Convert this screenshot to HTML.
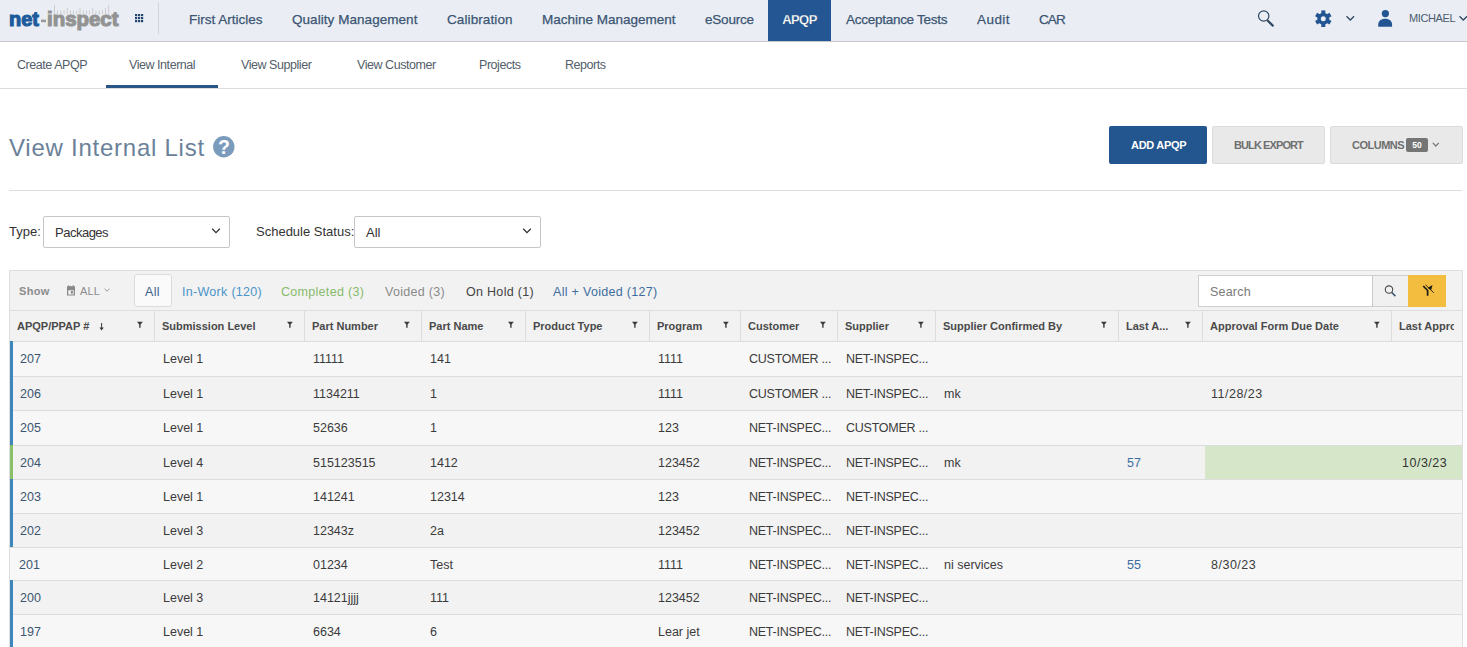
<!DOCTYPE html>
<html><head><meta charset="utf-8"><style>
*{box-sizing:border-box;margin:0;padding:0}
html,body{width:1467px;height:647px;overflow:hidden;background:#fff;font-family:"Liberation Sans",sans-serif;color:#333}
.a{position:absolute;white-space:nowrap}
svg{position:absolute;overflow:visible}
.nav{position:absolute;top:0;height:41px;line-height:39px;font-size:13.5px;color:#3b5573;white-space:nowrap;-webkit-text-stroke:0.25px #3b5573}
.snav{position:absolute;top:58px;font-size:12.5px;color:#535e6a;white-space:nowrap;letter-spacing:-0.45px}
.btn{position:absolute;top:126px;height:38px;border-radius:2px;font-size:11px;font-weight:bold;white-space:nowrap}
.lbl{position:absolute;font-size:13px;color:#333;white-space:nowrap}
.sel{position:absolute;top:216px;height:32px;border:1px solid #c6c6c6;border-radius:2px;background:#fff}
.tb{position:absolute;top:285px;font-size:12.5px;white-space:nowrap;letter-spacing:0.3px}
.hc{position:absolute;top:311px;height:30px;font-size:11px;font-weight:bold;color:#4a4a4a;line-height:30px;white-space:nowrap;overflow:hidden}
.vl{position:absolute;top:311px;width:1px;height:30px;background:#dddddd}
.hl{position:absolute;left:10px;width:1452px;height:1px;background:#dcdcdc}
.cell{position:absolute;font-size:12.5px;color:#333;white-space:nowrap}
</style></head><body>
<div class="a" style="left:0;top:0;width:1467px;height:41px;background:#eaeef4"></div>
<div class="a" style="left:0;top:41px;width:1467px;height:1px;background:#c6c8cc"></div>
<svg style="left:0;top:0" width="160" height="40" viewBox="0 0 160 40">
<g fill="#c2c2c2"><rect x="54.0" y="5" width="0.8" height="9.5"/><rect x="57.2" y="10.5" width="0.8" height="4"/><rect x="60.4" y="10.5" width="0.8" height="4"/><rect x="63.6" y="10.5" width="0.8" height="4"/><rect x="66.8" y="8" width="0.8" height="6.5"/><rect x="70.0" y="10.5" width="0.8" height="4"/><rect x="73.2" y="10.5" width="0.8" height="4"/><rect x="76.4" y="10.5" width="0.8" height="4"/><rect x="79.6" y="8" width="0.8" height="6.5"/><rect x="82.8" y="10.5" width="0.8" height="4"/><rect x="86.0" y="10.5" width="0.8" height="4"/><rect x="89.2" y="10.5" width="0.8" height="4"/><rect x="92.4" y="8" width="0.8" height="6.5"/><rect x="95.6" y="10.5" width="0.8" height="4"/><rect x="98.8" y="10.5" width="0.8" height="4"/><rect x="102.0" y="10.5" width="0.8" height="4"/><rect x="105.2" y="8" width="0.8" height="6.5"/><rect x="108.4" y="5" width="0.8" height="9.5"/></g>
<text x="9" y="26" font-family="Liberation Sans" font-weight="bold" font-size="19.5" fill="#1c5b9c" stroke="#1c5b9c" stroke-width="1.1" textLength="30" lengthAdjust="spacingAndGlyphs">net</text>
<rect x="41" y="19.6" width="5" height="2.6" fill="#9a9a9a"/>
<text x="47" y="26" font-family="Liberation Sans" font-weight="bold" font-size="19.5" fill="#939393" stroke="#939393" stroke-width="1.1" textLength="71.5" lengthAdjust="spacingAndGlyphs">inspect</text>
<g fill="#24466e"><rect x="135" y="14" width="2.2" height="2.2"/><rect x="138" y="14" width="2.2" height="2.2"/><rect x="141" y="14" width="2.2" height="2.2"/><rect x="135" y="17" width="2.2" height="2.2"/><rect x="138" y="17" width="2.2" height="2.2"/><rect x="141" y="17" width="2.2" height="2.2"/><rect x="135" y="20" width="2.2" height="2.2"/><rect x="138" y="20" width="2.2" height="2.2"/><rect x="141" y="20" width="2.2" height="2.2"/></g>
<rect x="158" y="2" width="1" height="32" fill="#d2d5da"/>
</svg>
<div class="nav" style="left:189px;letter-spacing:0px">First Articles</div>
<div class="nav" style="left:292px;letter-spacing:0.05px">Quality Management</div>
<div class="nav" style="left:447px;letter-spacing:0.1px">Calibration</div>
<div class="nav" style="left:542px;letter-spacing:0px">Machine Management</div>
<div class="nav" style="left:705px;letter-spacing:-0.2px">eSource</div>
<div class="nav" style="left:846px;letter-spacing:-0.27px">Acceptance Tests</div>
<div class="nav" style="left:977px;letter-spacing:0.45px">Audit</div>
<div class="nav" style="left:1039px;letter-spacing:-0.9px">CAR</div>
<div class="a" style="left:768px;top:0;width:63px;height:41px;background:#235692"></div>
<div class="nav" style="left:768px;width:63px;text-align:center;color:#fff;font-weight:bold;font-size:13px;letter-spacing:-0.6px">APQP</div>
<svg style="left:1240px;top:0" width="227" height="40" viewBox="1240 0 227 40">
<circle cx="1263.7" cy="16" r="5.2" fill="none" stroke="#2f4864" stroke-width="1.2"/>
<line x1="1267.3" y1="20.2" x2="1273.4" y2="26.3" stroke="#2f4864" stroke-width="2.3"/>
<g transform="translate(1323.3 18.7)" fill="#235592">
<circle r="6" />
<rect x="-2" y="-8.3" width="4" height="4" transform="rotate(0)"/><rect x="-2" y="-8.3" width="4" height="4" transform="rotate(60)"/><rect x="-2" y="-8.3" width="4" height="4" transform="rotate(120)"/><rect x="-2" y="-8.3" width="4" height="4" transform="rotate(180)"/><rect x="-2" y="-8.3" width="4" height="4" transform="rotate(240)"/><rect x="-2" y="-8.3" width="4" height="4" transform="rotate(300)"/>
<circle r="2.5" fill="#eaeef4"/>
</g>
<polyline points="1346.5,16.2 1350.3,20 1354.1,16.2" fill="none" stroke="#2f4864" stroke-width="1.3"/>
<circle cx="1385.4" cy="13.6" r="3.6" fill="#235592"/>
<path d="M1378.2,26.8 L1378.2,25 C1378.2,21 1381,18.8 1385.2,18.8 C1389.4,18.8 1392.1,21 1392.1,25 L1392.1,26.8 Z" fill="#235592"/>
<polyline points="1459.5,16.2 1463.3,20 1467.1,16.2" fill="none" stroke="#2f4864" stroke-width="1.3"/>
</svg>
<div class="a" style="left:1409px;top:12px;font-size:11px;color:#4a5a6e;letter-spacing:-0.4px">MICHAEL</div>
<div class="snav" style="left:17px">Create APQP</div>
<div class="snav" style="left:129px">View Internal</div>
<div class="snav" style="left:241px">View Supplier</div>
<div class="snav" style="left:357px">View Customer</div>
<div class="snav" style="left:479px">Projects</div>
<div class="snav" style="left:565px">Reports</div>
<div class="a" style="left:106px;top:85px;width:112px;height:3px;background:#2a5587"></div>
<div class="a" style="left:0;top:88px;width:1467px;height:1px;background:#dcdcdc"></div>
<div class="a" style="left:9px;top:134px;font-size:24px;color:#6a8199;letter-spacing:0.75px">View Internal List</div>
<svg style="left:213px;top:136px" width="22" height="22" viewBox="0 0 22 22"><circle cx="10.8" cy="10.8" r="10.7" fill="#7b9bbd"/>
<text x="10.9" y="18.4" text-anchor="middle" font-family="Liberation Sans" font-weight="bold" font-size="19.5" fill="#fff">?</text></svg>
<div class="btn" style="left:1109px;width:98px;background:#23558f"></div>
<div class="a" style="left:1131px;top:139px;font-size:11px;font-weight:bold;color:#fff;letter-spacing:-0.3px">ADD APQP</div>
<div class="btn" style="left:1212px;width:113px;background:#e9e9ea;border:1px solid #dbdbdb"></div>
<div class="a" style="left:1234px;top:139px;font-size:11px;font-weight:bold;color:#6f6f6f;letter-spacing:-0.9px">BULK EXPORT</div>
<div class="btn" style="left:1330px;width:133px;background:#e9e9ea;border:1px solid #dbdbdb"></div>
<div class="a" style="left:1352px;top:139px;font-size:11px;font-weight:bold;color:#6f6f6f;letter-spacing:-0.5px">COLUMNS</div>
<div class="a" style="left:1406px;top:138px;width:22px;height:14px;background:#757575;border-radius:2px;color:#fff;font-size:8.5px;font-weight:bold;text-align:center;line-height:14px">50</div>
<svg style="left:1432px;top:142px" width="8" height="6" viewBox="0 0 8 6"><polyline points="0.8,0.8 3.8,4 6.8,0.8" fill="none" stroke="#777" stroke-width="1.2"/></svg>
<div class="a" style="left:9px;top:190px;width:1453px;height:1px;background:#dedede"></div>
<div class="lbl" style="left:9px;top:224px">Type:</div>
<div class="sel" style="left:43px;width:187px"></div>
<div class="a" style="left:55px;top:225px;font-size:13px;color:#333;letter-spacing:-0.5px">Packages</div>
<svg style="left:212px;top:228px" width="9" height="6" viewBox="0 0 9 6"><polyline points="0.2,0.8 4,4.6 7.8,0.8" fill="none" stroke="#333" stroke-width="1.3"/></svg>
<div class="lbl" style="left:256px;top:224px">Schedule Status:</div>
<div class="sel" style="left:354px;width:187px"></div>
<div class="a" style="left:366px;top:225px;font-size:13px;color:#333">All</div>
<svg style="left:523px;top:228px" width="9" height="6" viewBox="0 0 9 6"><polyline points="0.2,0.8 4,4.6 7.8,0.8" fill="none" stroke="#333" stroke-width="1.3"/></svg>
<div class="a" style="left:9px;top:270px;width:1454px;height:400px;border:1px solid #dedede;background:#f2f2f2"></div>
<div class="tb" style="left:19px;font-size:11px;font-weight:bold;color:#8c8c8c;top:285px">Show</div>
<svg style="left:66px;top:285px" width="12" height="12" viewBox="0 0 12 12" fill="#888">
<rect x="1" y="1.2" width="8" height="3.6"/><rect x="2.3" y="0.2" width="1" height="1.5"/><rect x="6.7" y="0.2" width="1" height="1.5"/>
<path d="M1,4 h8 v6.6 h-8 z M2.2,5.2 v4.2 h5.6 v-4.2 z" fill-rule="evenodd"/><rect x="4.9" y="6" width="2" height="2.6"/></svg>
<div class="tb" style="left:80px;font-size:11px;color:#8c8c8c;top:285px;letter-spacing:0.2px">ALL</div>
<svg style="left:104px;top:288px" width="7" height="5" viewBox="0 0 7 5"><polyline points="0.5,0.8 3,3.2 5.5,0.8" fill="none" stroke="#999" stroke-width="1"/></svg>
<div class="a" style="left:134px;top:274px;width:38px;height:33px;background:#fafafa;border:1px solid #dcdcdc;border-radius:3px"></div>
<div class="tb" style="left:145px;color:#3b6189">All</div>
<div class="tb" style="left:182px;color:#4a94c8">In-Work (120)</div>
<div class="tb" style="left:281px;color:#86bb6a">Completed (3)</div>
<div class="tb" style="left:385px;color:#8a8a8a">Voided (3)</div>
<div class="tb" style="left:466px;color:#444">On Hold (1)</div>
<div class="tb" style="left:553px;color:#3d6d9e">All + Voided (127)</div>
<div class="a" style="left:1198px;top:275px;width:175px;height:32px;background:#fff;border:1px solid #cfcfcf"></div>
<div class="tb" style="left:1210px;color:#7a7a7a;top:285px;letter-spacing:0.2px">Search</div>
<div class="a" style="left:1372px;top:275px;width:37px;height:32px;background:#f0f0f0;border:1px solid #cfcfcf;border-left:1px solid #c8c8c8"></div>
<svg style="left:1380px;top:280px" width="20" height="20" viewBox="1380 280 20 20">
<circle cx="1389" cy="289.6" r="3.7" fill="none" stroke="#4a4a4a" stroke-width="1.1"/>
<line x1="1391.6" y1="292.3" x2="1395.4" y2="296.1" stroke="#3b5573" stroke-width="1.6"/></svg>
<div class="a" style="left:1408px;top:275px;width:38px;height:32px;background:#f3be3f"></div>
<svg style="left:1418px;top:282px" width="20" height="18" viewBox="1418 282 20 18">
<path d="M1423,285.5 L1433,285.5 L1429,289.5 L1428.6,289.5 Z" fill="none"/>
<polyline points="1423.2,286 1427.6,290.5 1427.6,295.8" fill="none" stroke="#1a1a1a" stroke-width="1.7"/>
<polygon points="1427.5,288 1432.5,285 1431.2,290" fill="#1a1a1a"/>
<line x1="1425.5" y1="284.8" x2="1433.8" y2="292.8" stroke="#1a1a1a" stroke-width="0.9"/>
</svg>
<div class="hl" style="top:310px;background:#dedede"></div>
<div class="hc" style="left:17px;width:137px">APQP/PPAP #</div>
<div class="vl" style="left:154px"></div>
<div class="hc" style="left:162px;width:142px">Submission Level</div>
<div class="vl" style="left:304px"></div>
<div class="hc" style="left:312px;width:109px">Part Number</div>
<div class="vl" style="left:421px"></div>
<div class="hc" style="left:429px;width:96px">Part Name</div>
<div class="vl" style="left:525px"></div>
<div class="hc" style="left:533px;width:116px">Product Type</div>
<div class="vl" style="left:649px"></div>
<div class="hc" style="left:657px;width:83px">Program</div>
<div class="vl" style="left:740px"></div>
<div class="hc" style="left:748px;width:89px">Customer</div>
<div class="vl" style="left:837px"></div>
<div class="hc" style="left:845px;width:90px">Supplier</div>
<div class="vl" style="left:935px"></div>
<div class="hc" style="left:943px;width:175px">Supplier Confirmed By</div>
<div class="vl" style="left:1118px"></div>
<div class="hc" style="left:1126px;width:76px">Last A...</div>
<div class="vl" style="left:1202px"></div>
<div class="hc" style="left:1210px;width:181px">Approval Form Due Date</div>
<div class="vl" style="left:1391px"></div>
<div class="hc" style="left:1399px;width:55px">Last Appro</div>
<svg style="left:0;top:0" width="1467" height="647" viewBox="0 0 1467 647" fill="#3a3a3a"><path d="M137,321.8 h5.8 l-2.2,2.6 v3.3 h-1.4 v-3.3 z"/><path d="M287,321.8 h5.8 l-2.2,2.6 v3.3 h-1.4 v-3.3 z"/><path d="M404,321.8 h5.8 l-2.2,2.6 v3.3 h-1.4 v-3.3 z"/><path d="M508,321.8 h5.8 l-2.2,2.6 v3.3 h-1.4 v-3.3 z"/><path d="M632,321.8 h5.8 l-2.2,2.6 v3.3 h-1.4 v-3.3 z"/><path d="M723,321.8 h5.8 l-2.2,2.6 v3.3 h-1.4 v-3.3 z"/><path d="M820,321.8 h5.8 l-2.2,2.6 v3.3 h-1.4 v-3.3 z"/><path d="M918,321.8 h5.8 l-2.2,2.6 v3.3 h-1.4 v-3.3 z"/><path d="M1101,321.8 h5.8 l-2.2,2.6 v3.3 h-1.4 v-3.3 z"/><path d="M1185,321.8 h5.8 l-2.2,2.6 v3.3 h-1.4 v-3.3 z"/><path d="M1374,321.8 h5.8 l-2.2,2.6 v3.3 h-1.4 v-3.3 z"/><rect x="101.1" y="323" width="1" height="5"/><path d="M99.4,327.4 h4.4 l-2.2,3 z"/></svg>
<div class="hl" style="top:341px"></div>
<div class="a" style="left:10px;top:342px;width:1452px;height:34px;background:#f7f7f7"></div>
<div class="a" style="left:10px;top:341px;width:3px;height:35px;background:#3d87bd"></div>
<div class="cell" style="left:20px;top:352px;color:#3c5570;letter-spacing:0px">207</div>
<div class="cell" style="left:163px;top:352px;color:#3b3b3b;letter-spacing:0px">Level 1</div>
<div class="cell" style="left:313px;top:352px;color:#3b3b3b;letter-spacing:0px">11111</div>
<div class="cell" style="left:430px;top:352px;color:#3b3b3b;letter-spacing:0px">141</div>
<div class="cell" style="left:658px;top:352px;color:#3b3b3b;letter-spacing:0px">1111</div>
<div class="cell" style="left:749px;top:352px;color:#3b3b3b;letter-spacing:-0.25px">CUSTOMER ...</div>
<div class="cell" style="left:846px;top:352px;color:#3b3b3b;letter-spacing:-0.25px">NET-INSPEC...</div>
<div class="hl" style="top:376px"></div>
<div class="a" style="left:10px;top:377px;width:1452px;height:33px;background:#f2f2f2"></div>
<div class="a" style="left:10px;top:376px;width:3px;height:34px;background:#3d87bd"></div>
<div class="cell" style="left:20px;top:387px;color:#3c5570;letter-spacing:0px">206</div>
<div class="cell" style="left:163px;top:387px;color:#3b3b3b;letter-spacing:0px">Level 1</div>
<div class="cell" style="left:313px;top:387px;color:#3b3b3b;letter-spacing:0px">1134211</div>
<div class="cell" style="left:430px;top:387px;color:#3b3b3b;letter-spacing:0px">1</div>
<div class="cell" style="left:658px;top:387px;color:#3b3b3b;letter-spacing:0px">1111</div>
<div class="cell" style="left:749px;top:387px;color:#3b3b3b;letter-spacing:-0.25px">CUSTOMER ...</div>
<div class="cell" style="left:846px;top:387px;color:#3b3b3b;letter-spacing:-0.25px">NET-INSPEC...</div>
<div class="cell" style="left:944px;top:387px;color:#3b3b3b;letter-spacing:0px">mk</div>
<div class="cell" style="left:1211px;top:387px;color:#3b3b3b;letter-spacing:0.5px">11/28/23</div>
<div class="hl" style="top:410px"></div>
<div class="a" style="left:10px;top:411px;width:1452px;height:34px;background:#f7f7f7"></div>
<div class="a" style="left:10px;top:410px;width:3px;height:35px;background:#3d87bd"></div>
<div class="cell" style="left:20px;top:421px;color:#3c5570;letter-spacing:0px">205</div>
<div class="cell" style="left:163px;top:421px;color:#3b3b3b;letter-spacing:0px">Level 1</div>
<div class="cell" style="left:313px;top:421px;color:#3b3b3b;letter-spacing:0px">52636</div>
<div class="cell" style="left:430px;top:421px;color:#3b3b3b;letter-spacing:0px">1</div>
<div class="cell" style="left:658px;top:421px;color:#3b3b3b;letter-spacing:0px">123</div>
<div class="cell" style="left:749px;top:421px;color:#3b3b3b;letter-spacing:-0.25px">NET-INSPEC...</div>
<div class="cell" style="left:846px;top:421px;color:#3b3b3b;letter-spacing:-0.25px">CUSTOMER ...</div>
<div class="hl" style="top:445px"></div>
<div class="a" style="left:10px;top:446px;width:1452px;height:33px;background:#f2f2f2"></div>
<div class="a" style="left:10px;top:445px;width:3px;height:34px;background:#8bc06a"></div>
<div class="a" style="left:1205px;top:446px;width:257px;height:33px;background:#d6e7c9"></div>
<div class="cell" style="left:1402px;top:456px;color:#333;letter-spacing:0.5px">10/3/23</div>
<div class="cell" style="left:20px;top:456px;color:#3c5570;letter-spacing:0px">204</div>
<div class="cell" style="left:163px;top:456px;color:#3b3b3b;letter-spacing:0px">Level 4</div>
<div class="cell" style="left:313px;top:456px;color:#3b3b3b;letter-spacing:0px">515123515</div>
<div class="cell" style="left:430px;top:456px;color:#3b3b3b;letter-spacing:0px">1412</div>
<div class="cell" style="left:658px;top:456px;color:#3b3b3b;letter-spacing:0px">123452</div>
<div class="cell" style="left:749px;top:456px;color:#3b3b3b;letter-spacing:-0.25px">NET-INSPEC...</div>
<div class="cell" style="left:846px;top:456px;color:#3b3b3b;letter-spacing:-0.25px">NET-INSPEC...</div>
<div class="cell" style="left:944px;top:456px;color:#3b3b3b;letter-spacing:0px">mk</div>
<div class="cell" style="left:1127px;top:456px;color:#3d6d9e;letter-spacing:0px">57</div>
<div class="hl" style="top:479px"></div>
<div class="a" style="left:10px;top:480px;width:1452px;height:33px;background:#f7f7f7"></div>
<div class="a" style="left:10px;top:479px;width:3px;height:34px;background:#3d87bd"></div>
<div class="cell" style="left:20px;top:490px;color:#3c5570;letter-spacing:0px">203</div>
<div class="cell" style="left:163px;top:490px;color:#3b3b3b;letter-spacing:0px">Level 1</div>
<div class="cell" style="left:313px;top:490px;color:#3b3b3b;letter-spacing:0px">141241</div>
<div class="cell" style="left:430px;top:490px;color:#3b3b3b;letter-spacing:0px">12314</div>
<div class="cell" style="left:658px;top:490px;color:#3b3b3b;letter-spacing:0px">123</div>
<div class="cell" style="left:749px;top:490px;color:#3b3b3b;letter-spacing:-0.25px">NET-INSPEC...</div>
<div class="cell" style="left:846px;top:490px;color:#3b3b3b;letter-spacing:-0.25px">NET-INSPEC...</div>
<div class="hl" style="top:513px"></div>
<div class="a" style="left:10px;top:514px;width:1452px;height:33px;background:#f2f2f2"></div>
<div class="a" style="left:10px;top:513px;width:3px;height:34px;background:#3d87bd"></div>
<div class="cell" style="left:20px;top:524px;color:#3c5570;letter-spacing:0px">202</div>
<div class="cell" style="left:163px;top:524px;color:#3b3b3b;letter-spacing:0px">Level 3</div>
<div class="cell" style="left:313px;top:524px;color:#3b3b3b;letter-spacing:0px">12343z</div>
<div class="cell" style="left:430px;top:524px;color:#3b3b3b;letter-spacing:0px">2a</div>
<div class="cell" style="left:658px;top:524px;color:#3b3b3b;letter-spacing:0px">123452</div>
<div class="cell" style="left:749px;top:524px;color:#3b3b3b;letter-spacing:-0.25px">NET-INSPEC...</div>
<div class="cell" style="left:846px;top:524px;color:#3b3b3b;letter-spacing:-0.25px">NET-INSPEC...</div>
<div class="hl" style="top:547px"></div>
<div class="a" style="left:10px;top:548px;width:1452px;height:32px;background:#f7f7f7"></div>
<div class="cell" style="left:19px;top:558px;color:#3c5570;letter-spacing:0px">201</div>
<div class="cell" style="left:163px;top:558px;color:#3b3b3b;letter-spacing:0px">Level 2</div>
<div class="cell" style="left:313px;top:558px;color:#3b3b3b;letter-spacing:0px">01234</div>
<div class="cell" style="left:430px;top:558px;color:#3b3b3b;letter-spacing:0px">Test</div>
<div class="cell" style="left:658px;top:558px;color:#3b3b3b;letter-spacing:0px">1111</div>
<div class="cell" style="left:749px;top:558px;color:#3b3b3b;letter-spacing:-0.25px">NET-INSPEC...</div>
<div class="cell" style="left:846px;top:558px;color:#3b3b3b;letter-spacing:-0.25px">NET-INSPEC...</div>
<div class="cell" style="left:944px;top:558px;color:#3b3b3b;letter-spacing:0px">ni services</div>
<div class="cell" style="left:1127px;top:558px;color:#3d6d9e;letter-spacing:0px">55</div>
<div class="cell" style="left:1211px;top:558px;color:#3b3b3b;letter-spacing:0.5px">8/30/23</div>
<div class="hl" style="top:580px"></div>
<div class="a" style="left:10px;top:581px;width:1452px;height:33px;background:#f2f2f2"></div>
<div class="a" style="left:10px;top:580px;width:3px;height:34px;background:#3d87bd"></div>
<div class="cell" style="left:20px;top:591px;color:#3c5570;letter-spacing:0px">200</div>
<div class="cell" style="left:163px;top:591px;color:#3b3b3b;letter-spacing:0px">Level 3</div>
<div class="cell" style="left:313px;top:591px;color:#3b3b3b;letter-spacing:0px">14121jjjj</div>
<div class="cell" style="left:430px;top:591px;color:#3b3b3b;letter-spacing:0px">111</div>
<div class="cell" style="left:658px;top:591px;color:#3b3b3b;letter-spacing:0px">123452</div>
<div class="cell" style="left:749px;top:591px;color:#3b3b3b;letter-spacing:-0.25px">NET-INSPEC...</div>
<div class="cell" style="left:846px;top:591px;color:#3b3b3b;letter-spacing:-0.25px">NET-INSPEC...</div>
<div class="hl" style="top:614px"></div>
<div class="a" style="left:10px;top:615px;width:1452px;height:33px;background:#f7f7f7"></div>
<div class="a" style="left:10px;top:614px;width:3px;height:34px;background:#3d87bd"></div>
<div class="cell" style="left:20px;top:625px;color:#3c5570;letter-spacing:0px">197</div>
<div class="cell" style="left:163px;top:625px;color:#3b3b3b;letter-spacing:0px">Level 1</div>
<div class="cell" style="left:313px;top:625px;color:#3b3b3b;letter-spacing:0px">6634</div>
<div class="cell" style="left:430px;top:625px;color:#3b3b3b;letter-spacing:0px">6</div>
<div class="cell" style="left:658px;top:625px;color:#3b3b3b;letter-spacing:0px">Lear jet</div>
<div class="cell" style="left:749px;top:625px;color:#3b3b3b;letter-spacing:-0.25px">NET-INSPEC...</div>
<div class="cell" style="left:846px;top:625px;color:#3b3b3b;letter-spacing:-0.25px">NET-INSPEC...</div>
</body></html>
